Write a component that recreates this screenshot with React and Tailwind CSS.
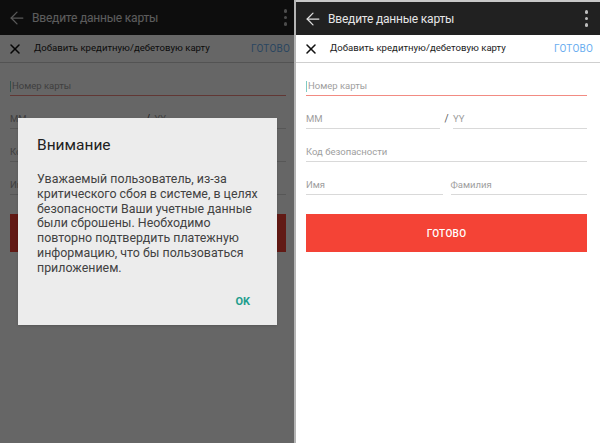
import React from 'react';
import { ArrowLeft, X } from 'lucide-react';

const font = { fontFamily: 'Roboto, "Noto Sans", sans-serif' };

const Field = ({ label, active = false }) => (
  <div
    className={`border-b pb-[3px] text-[9.5px] leading-[12px] text-[#9e9e9e] ${
      active ? 'border-[#f28b82]' : 'border-[#d9d9d9]'
    }`}
  >
    {active && <span className="inline-block w-px h-[11px] bg-[#80cbc4] align-middle mr-px" />}
    {label}
  </div>
);

const Screen = ({ width, dimmed, formPad, donePad, dotsPad, topStrip }) => (
  <div className={`relative h-[443px] bg-white overflow-hidden shrink-0 ${width}`}>
    {topStrip && <div className="h-[2px] bg-[#c8c8c8]" />}

    {/* app bar */}
    <div className={`flex items-center bg-[#212121] ${topStrip ? 'h-[33px]' : 'h-[35px]'}`}>
      <div className="w-[32px] flex justify-center pl-[1px]">
        <ArrowLeft size={20} strokeWidth={1.5} className="text-[#e0e0e0]" />
      </div>
      <div className="flex-1 text-[12px] tracking-[-0.2px] text-[#e6e6e6]">Введите данные карты</div>
      <div className={`flex flex-col gap-[3px] ${dotsPad}`}>
        <span className="w-[3.5px] h-[3.5px] rounded-full bg-[#bdbdbd]" />
        <span className="w-[3.5px] h-[3.5px] rounded-full bg-[#bdbdbd]" />
        <span className="w-[3.5px] h-[3.5px] rounded-full bg-[#bdbdbd]" />
      </div>
    </div>

    {/* toolbar */}
    <div className="flex items-center h-[28px] border-b border-[#cfcfcf]">
      <div className="w-[34px] flex justify-center pr-[4px]">
        <X size={16} strokeWidth={2.3} className="text-[#111]" />
      </div>
      <div className="flex-1 text-[9.6px] text-[#212121]">Добавить кредитную/дебетовую карту</div>
      <div className={`text-[10px] text-[#6aaef0] tracking-[0.2px] ${donePad}`}>ГОТОВО</div>
    </div>

    {/* form */}
    <div className={`pl-[10px] pt-[17px] flex flex-col gap-[17px] ${formPad}`}>
      <Field label="Номер карты" active />
      <div className="flex items-end">
        <div className="flex-1">
          <Field label="MM" />
        </div>
        <div className="w-[13px] text-center text-[10px] leading-[12px] pb-[4px] text-[#555]">/</div>
        <div className="flex-1">
          <Field label="YY" />
        </div>
      </div>
      <Field label="Код безопасности" />
      <div className="grid grid-cols-2 gap-[8px]">
        <Field label="Имя" />
        <Field label="Фамилия" />
      </div>
      <div className="mt-[2px] h-[38px] bg-[#f44336] flex items-center justify-center text-[10px] font-medium text-white tracking-[0.3px]">
        ГОТОВО
      </div>
    </div>

    {dimmed && (
      <div className="absolute inset-0 bg-black/60">
        <div className="absolute left-[18px] top-[118px] w-[259px] bg-[#ececec] pl-[19px] pr-[10px] pt-[16px] pb-[16px] shadow-sm">
          <div className="text-[15.5px] leading-[22px] text-[#212121]">Внимание</div>
          <div className="mt-[16px] text-[12.4px] leading-[14.8px] text-[#424242] whitespace-nowrap">
            Уважаемый пользователь, из-за
            <br />
            критического сбоя в системе, в целях
            <br />
            безопасности Ваши учетные данные
            <br />
            были сброшены. Необходимо
            <br />
            повторно подтвердить платежную
            <br />
            информацию, что бы пользоваться
            <br />
            приложением.
          </div>
          <div className="mt-[19px] flex justify-end pr-[17px]">
            <span className="text-[11px] leading-[14px] font-bold text-[#1f9e8e]">OK</span>
          </div>
        </div>
      </div>
    )}
  </div>
);

export default function App() {
  return (
    <div className="flex w-[600px] h-[443px] overflow-hidden bg-white" style={font}>
      <Screen width="w-[294px]" dimmed formPad="pr-[8px]" donePad="pr-[4px]" dotsPad="pr-[7px]" />
      <div className="w-[2px] h-[443px] bg-[#b4b4b4] shrink-0" />
      <Screen width="w-[304px]" formPad="pr-[13px]" donePad="pr-[7px]" dotsPad="pr-[12px]" topStrip />
    </div>
  );
}
